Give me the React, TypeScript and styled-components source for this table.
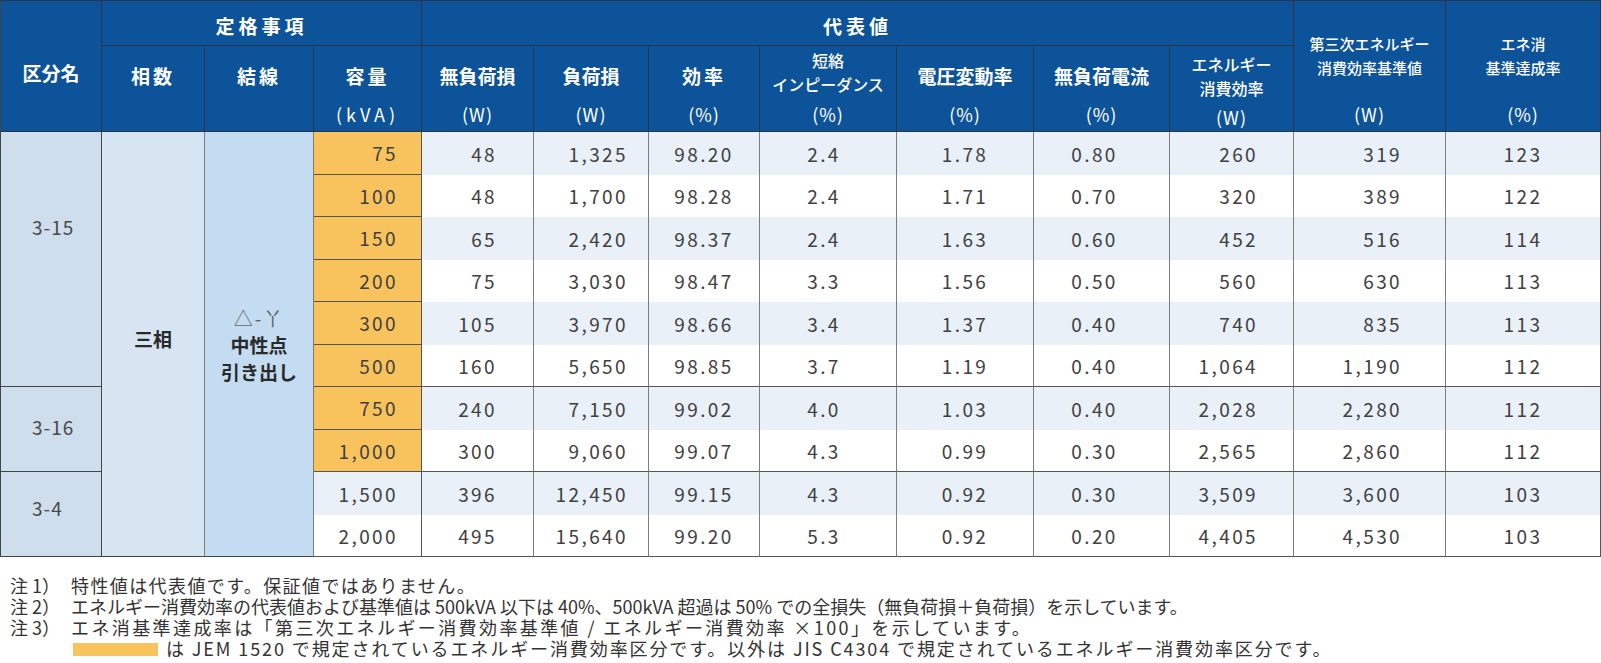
import React from 'react';
import styled, { createGlobalStyle } from 'styled-components';

const palette = {
  head: '#0d5399',
  headLine: '#2a3647',
  group: '#cedeec',
  phase: '#d7e5f2',
  wire: '#c3dcf1',
  orange: '#f8c35d',
  light: '#e9f0f8',
  text: '#404040',
  vline: '#7d7d7d',
  dark: '#444444',
};

const GlobalStyle = createGlobalStyle`
  body {
    margin: 0;
    background: #ffffff;
    font-family: "Noto Sans CJK JP", "Noto Sans", sans-serif;
  }
`;

const Wrapper = styled.div`
  width: 1601px;
`;

const Table = styled.table`
  border-collapse: separate;
  border-spacing: 0;
  table-layout: fixed;
  width: 1600px;
  border-top: 1px solid ${palette.headLine};
  border-left: 1px solid ${palette.dark};
`;

const Th = styled.th<{ $pt?: number; $spacing?: number }>`
  background: ${palette.head};
  color: #ffffff;
  font-weight: 700;
  font-size: 19px;
  letter-spacing: ${(p) => p.$spacing ?? 0}px;
  padding: ${(p) => p.$pt ?? 0}px 0 0 0;
  text-align: center;
  vertical-align: middle;
  border-right: 1px solid ${palette.headLine};
  border-bottom: 1px solid ${palette.headLine};
`;

const HeadStack = styled.div<{ $h: number }>`
  display: flex;
  flex-direction: column;
  height: ${(p) => p.$h}px;
`;

const HeadLabel = styled.div<{ $pt: number; $size: number; $spacing?: number }>`
  flex: 1;
  display: flex;
  flex-direction: column;
  justify-content: center;
  align-items: center;
  padding-top: ${(p) => p.$pt}px;
  font-size: ${(p) => p.$size}px;
  line-height: ${(p) => (p.$size < 18 ? 24 : 26)}px;
  letter-spacing: ${(p) => p.$spacing ?? 0}px;
  font-weight: ${(p) => (p.$size < 18 ? 500 : 700)};
`;

const HeadUnit = styled.div<{ $spacing?: number }>`
  height: 34px;
  line-height: 34px;
  font-size: 18px;
  font-weight: 400;
  letter-spacing: ${(p) => p.$spacing ?? 1}px;
`;

const BodyRow = styled.tr<{ $light: boolean }>`
  height: 42.5px;
  background: ${(p) => (p.$light ? palette.light : '#ffffff')};
`;

const Td = styled.td<{
  $bg?: string;
  $align: 'left' | 'right' | 'center';
  $pr?: number;
  $bottom?: string;
  $right?: string;
}>`
  background: ${(p) => p.$bg ?? 'transparent'};
  text-align: ${(p) => p.$align};
  padding: 0 ${(p) => p.$pr ?? 0}px 0 0;
  font-size: 19px;
  letter-spacing: 2.4px;
  color: ${palette.text};
  white-space: nowrap;
  vertical-align: middle;
  border-right: 1px solid ${(p) => p.$right ?? palette.vline};
  border-bottom: ${(p) => (p.$bottom ? `1px solid ${p.$bottom}` : 'none')};
`;

const GroupCell = styled.td<{ $pb: number }>`
  background: ${palette.group};
  padding: 0 0 ${(p) => p.$pb}px 31px;
  font-size: 19px;
  letter-spacing: 1px;
  color: #4a4a4a;
  text-align: left;
  vertical-align: middle;
  border-right: 1px solid ${palette.dark};
  border-bottom: 1px solid ${palette.dark};
`;

const SpanCell = styled.td<{ $bg: string; $pb?: number }>`
  background: ${(p) => p.$bg};
  text-align: center;
  vertical-align: middle;
  padding: 0 0 ${(p) => p.$pb ?? 0}px 0;
  font-size: 19px;
  font-weight: 700;
  color: #2a2a2a;
  line-height: 27px;
  border-right: 1px solid ${palette.vline};
  border-bottom: 1px solid ${palette.dark};
`;

const Symbol = styled.div`
  font-weight: 400;
  color: #666666;
  letter-spacing: 2px;
`;

const Notes = styled.div`
  padding: 18px 0 0 10px;
  font-size: 18px;
  line-height: 21px;
  color: #333333;
`;

const NoteLine = styled.div`
  display: flex;
  align-items: center;
  height: 21px;
  white-space: nowrap;
`;

const NoteMark = styled.span`
  width: 61px;
  flex: none;
`;

const NoteText = styled.span<{ $track: number }>`
  letter-spacing: ${(p) => p.$track}px;
`;

const Swatch = styled.span`
  display: inline-block;
  flex: none;
  width: 85px;
  height: 13px;
  margin: 2px 8px 0 2px;
  background: ${palette.orange};
`;

type Align = 'left' | 'right' | 'center';

const columns: { align: Align; pr?: number }[] = [
  { align: 'right', pr: 23 },
  { align: 'right', pr: 36 },
  { align: 'right', pr: 20 },
  { align: 'center' },
  { align: 'center', pr: 8 },
  { align: 'center' },
  { align: 'center', pr: 14 },
  { align: 'right', pr: 35 },
  { align: 'right', pr: 43 },
  { align: 'center' },
];

const rows = [
  ['75', '48', '1,325', '98.20', '2.4', '1.78', '0.80', '260', '319', '123'],
  ['100', '48', '1,700', '98.28', '2.4', '1.71', '0.70', '320', '389', '122'],
  ['150', '65', '2,420', '98.37', '2.4', '1.63', '0.60', '452', '516', '114'],
  ['200', '75', '3,030', '98.47', '3.3', '1.56', '0.50', '560', '630', '113'],
  ['300', '105', '3,970', '98.66', '3.4', '1.37', '0.40', '740', '835', '113'],
  ['500', '160', '5,650', '98.85', '3.7', '1.19', '0.40', '1,064', '1,190', '112'],
  ['750', '240', '7,150', '99.02', '4.0', '1.03', '0.40', '2,028', '2,280', '112'],
  ['1,000', '300', '9,060', '99.07', '4.3', '0.99', '0.30', '2,565', '2,860', '112'],
  ['1,500', '396', '12,450', '99.15', '4.3', '0.92', '0.30', '3,509', '3,600', '103'],
  ['2,000', '495', '15,640', '99.20', '5.3', '0.92', '0.20', '4,405', '4,530', '103'],
];

// 区分名: label is set a little above the middle of its span, as in the source sheet
const groups: Record<number, { label: string; span: number; pb: number }> = {
  0: { label: '3-15', span: 6, pb: 66 },
  6: { label: '3-16', span: 2, pb: 6 },
  8: { label: '3-4', span: 2, pb: 14 },
};

const boundaries = [5, 7, 9];
const orangeRows = 8;

const widths = [101, 103, 109, 108, 112, 115, 111, 137, 137, 136, 124, 152, 155];

const subHeads: {
  label: React.ReactNode;
  unit: string;
  size: number;
  spacing?: number;
  unitSpacing?: number;
  pt?: number;
}[] = [
  { label: '相数', unit: '', size: 19, spacing: 3 },
  { label: '結線', unit: '', size: 19, spacing: 3 },
  { label: '容量', unit: '(kVA)', size: 19, spacing: 3, unitSpacing: 4 },
  { label: '無負荷損', unit: '(W)', size: 19 },
  { label: '負荷損', unit: '(W)', size: 19 },
  { label: '効率', unit: '(%)', size: 19, spacing: 3 },
  { label: <><span>短絡</span><span>インピーダンス</span></>, unit: '(%)', size: 16, pt: 0 },
  { label: '電圧変動率', unit: '(%)', size: 19 },
  { label: '無負荷電流', unit: '(%)', size: 19 },
  { label: <><span>エネルギー</span><span>消費効率</span></>, unit: '(W)', size: 16, pt: 6 },
];

const notes: { mark: string; text: string; track: number; swatch?: boolean }[] = [
  { mark: '注 1）', text: '特性値は代表値です。保証値ではありません。', track: 1.4 },
  {
    mark: '注 2）',
    text: 'エネルギー消費効率の代表値および基準値は 500kVA 以下は 40%、500kVA 超過は 50% での全損失（無負荷損＋負荷損）を示しています。',
    track: 0,
  },
  {
    mark: '注 3）',
    text: 'エネ消基準達成率は「第三次エネルギー消費効率基準値 / エネルギー消費効率 ×100」を示しています。',
    track: 2.4,
  },
  {
    mark: '',
    text: 'は JEM 1520 で規定されているエネルギー消費効率区分です。以外は JIS C4304 で規定されているエネルギー消費効率区分です。',
    track: 1.9,
    swatch: true,
  },
];

const App: React.FC = () => {
  return (
    <Wrapper>
      <GlobalStyle />
      <Table>
        <colgroup>
          {widths.map((w, i) => (
            <col key={i} style={{ width: w }} />
          ))}
        </colgroup>
        <thead>
          <tr style={{ height: 45 }}>
            <Th rowSpan={2} $pt={12}>区分名</Th>
            <Th colSpan={3} $pt={4} $spacing={4}>定格事項</Th>
            <Th colSpan={7} $pt={4} $spacing={4}>代表値</Th>
            <Th rowSpan={2}>
              <HeadStack $h={130}>
                <HeadLabel $pt={14} $size={15}>
                  <span>第三次エネルギー</span>
                  <span>消費効率基準値</span>
                </HeadLabel>
                <HeadUnit>(W)</HeadUnit>
              </HeadStack>
            </Th>
            <Th rowSpan={2}>
              <HeadStack $h={130}>
                <HeadLabel $pt={14} $size={15}>
                  <span>エネ消</span>
                  <span>基準達成率</span>
                </HeadLabel>
                <HeadUnit>(%)</HeadUnit>
              </HeadStack>
            </Th>
          </tr>
          <tr style={{ height: 86 }}>
            {subHeads.map((h, i) => (
              <Th key={i}>
                <HeadStack $h={85}>
                  <HeadLabel $pt={h.pt ?? 8} $size={h.size} $spacing={h.spacing}>
                    {h.label}
                  </HeadLabel>
                  <HeadUnit $spacing={h.unitSpacing}>{h.unit}</HeadUnit>
                </HeadStack>
              </Th>
            ))}
          </tr>
        </thead>
        <tbody>
          {rows.map((row, r) => {
            const boundary = boundaries.includes(r);
            const group = groups[r];
            return (
              <BodyRow key={r} $light={r % 2 === 0}>
                {group && (
                  <GroupCell rowSpan={group.span} $pb={group.pb}>
                    {group.label}
                  </GroupCell>
                )}
                {r === 0 && (
                  <SpanCell rowSpan={rows.length} $bg={palette.phase} $pb={12}>
                    三相
                  </SpanCell>
                )}
                {r === 0 && (
                  <SpanCell rowSpan={rows.length} $bg={palette.wire}>
                    <Symbol>△-丫</Symbol>
                    <div>中性点</div>
                    <div>引き出し</div>
                  </SpanCell>
                )}
                {row.map((v, c) => {
                  const orange = c === 0 && r < orangeRows;
                  return (
                    <Td
                      key={c}
                      $align={columns[c].align}
                      $pr={columns[c].pr}
                      $bg={orange ? palette.orange : undefined}
                      $bottom={boundary || orange ? '#555555' : undefined}
                      $right={c === 0 || c === row.length - 1 ? '#555555' : undefined}
                    >
                      {v}
                    </Td>
                  );
                })}
              </BodyRow>
            );
          })}
        </tbody>
      </Table>
      <Notes>
        {notes.map((n, i) => (
          <NoteLine key={i}>
            <NoteMark>{n.mark}</NoteMark>
            {n.swatch && <Swatch />}
            <NoteText $track={n.track}>{n.text}</NoteText>
          </NoteLine>
        ))}
      </Notes>
    </Wrapper>
  );
};

export default App;
